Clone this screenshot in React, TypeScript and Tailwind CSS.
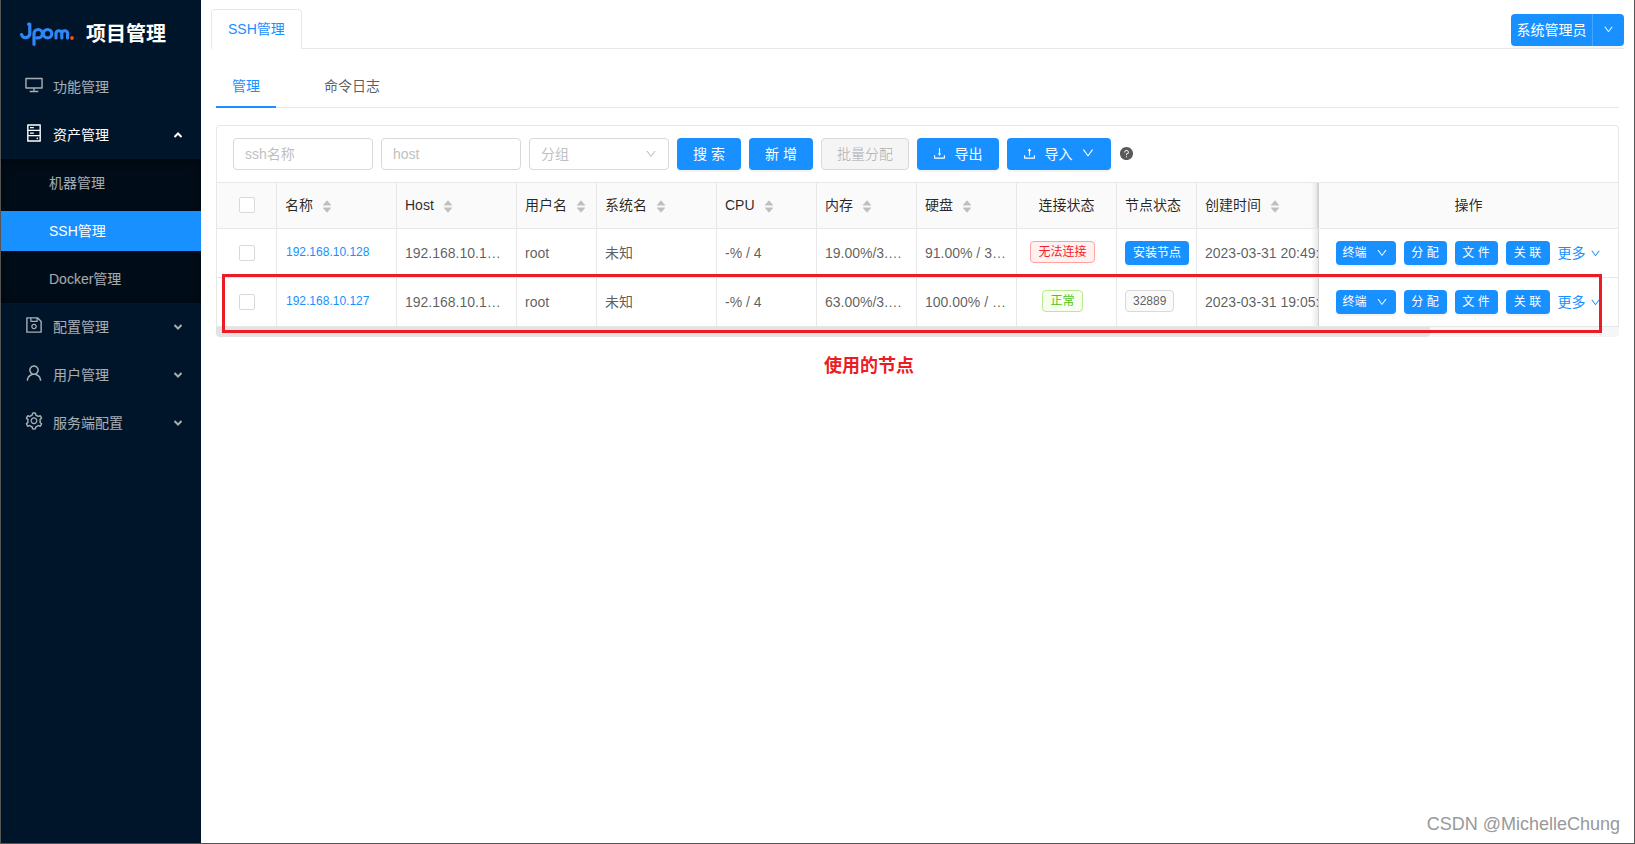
import type { ReactNode } from 'react';
import {
  AiFillCaretDown,
  AiFillCaretUp,
  AiFillQuestionCircle,
  AiOutlineDesktop,
  AiOutlineDown,
  AiOutlineDownload,
  AiOutlineHdd,
  AiOutlineSave,
  AiOutlineSetting,
  AiOutlineUpload,
  AiOutlineUser,
} from 'react-icons/ai';

const primary = 'bg-[#1890ff] text-white rounded shadow-[0_2px_0_rgba(0,0,0,0.045)]';

function Logo() {
  return (
    <svg viewBox="0 0 54 26" className="h-[26px] w-[54px] shrink-0" fill="none" aria-label="Jpom">
      <g stroke="#2f86f6" strokeWidth="3.2" strokeLinecap="round" strokeLinejoin="round">
        <path d="M8.600 3.200H9.800V13a4.200 4.200 0 0 1-8.200 .6" />
        <path d="M14 23.300V12.600a4.200 4.200 0 1 1 4.200 4.300h-1.200" />
        <circle cx="27.600" cy="12.700" r="4.200" />
        <path d="M36 17v-5a3 3 0 0 1 5.800 0v5M41.800 12a3 3 0 0 1 5.800 0v5" />
      </g>
      <circle cx="52" cy="17" r="1.900" fill="#ff4a12" />
    </svg>
  );
}

function Caret({ up = false }: { up?: boolean }) {
  return (
    <svg viewBox="0 0 10 8" className="h-2 w-2.5" fill="none" stroke="currentColor" strokeWidth="2">
      <path d={up ? 'M1.500 6L5 2.500L8.500 6' : 'M1.500 2L5 5.500L8.500 2'} />
    </svg>
  );
}

function MenuRow({ icon, label, open }: { icon: ReactNode; label: string; open?: boolean }) {
  return (
    <li className="py-1">
      <a
        href="#"
        className={
          open
            ? 'flex h-10 items-center pr-[18px] pl-[23px] text-white'
            : 'flex h-10 items-center pr-[18px] pl-[23px] text-white/65'
        }
      >
        <span className="mr-[9px] pb-1 text-[20px]">{icon}</span>
        <span className="grow">{label}</span>
        {open !== undefined && <Caret up={open} />}
      </a>
    </li>
  );
}

function SubRow({ label, active = false }: { label: string; active?: boolean }) {
  return (
    <li className="py-1">
      <a
        href="#"
        className={
          active
            ? 'flex h-10 items-center bg-[#1890ff] pl-12 text-white'
            : 'flex h-10 items-center pl-12 text-white/65'
        }
      >
        {label}
      </a>
    </li>
  );
}

function Sidebar() {
  return (
    <aside className="w-[200px] shrink-0 bg-[#001529]">
      <div className="flex h-[63px] items-center gap-3 pt-1 pl-[19px] text-white">
        <Logo />
        <h1 className="text-[20px] font-bold">项目管理</h1>
      </div>
      <nav>
        <ul>
          <MenuRow icon={<AiOutlineDesktop />} label="功能管理" />
          <MenuRow icon={<AiOutlineHdd />} label="资产管理" open />
          <li className="bg-[#000c17] shadow-[inset_0_2px_8px_rgba(0,0,0,0.45)]">
            <ul>
              <SubRow label="机器管理" />
              <SubRow label="SSH管理" active />
              <SubRow label="Docker管理" />
            </ul>
          </li>
          <MenuRow icon={<AiOutlineSave />} label="配置管理" open={false} />
          <MenuRow icon={<AiOutlineUser />} label="用户管理" open={false} />
          <MenuRow icon={<AiOutlineSetting />} label="服务端配置" open={false} />
        </ul>
      </nav>
    </aside>
  );
}

function Toolbar() {
  const field = 'h-8 w-[140px] rounded border border-[#d9d9d9] bg-white px-[11px] placeholder:text-[#bfbfbf]';
  return (
    <form className="flex items-center gap-2 px-4 py-3">
      <input className={field} placeholder="ssh名称" aria-label="ssh名称" />
      <input className={field} placeholder="host" aria-label="host" />
      <div className="relative">
        <select
          className="block h-8 w-[140px] appearance-none rounded border border-[#d9d9d9] bg-white px-[11px] text-[#bfbfbf]"
          aria-label="分组"
        >
          <option>分组</option>
        </select>
        <AiOutlineDown className="pointer-events-none absolute top-2.5 right-3 text-[12px] text-[#bfbfbf]" />
      </div>
      <button type="button" className={`h-8 w-16 ${primary}`}>搜 索</button>
      <button type="button" className={`h-8 w-16 ${primary}`}>新 增</button>
      <button type="button" disabled className="h-8 w-[88px] rounded border border-[#d9d9d9] bg-[#f5f5f5] text-black/25">
        批量分配
      </button>
      <button type="button" className={`flex h-8 w-[82px] items-center justify-center gap-2 pr-0.5 ${primary}`}>
        <AiOutlineDownload className="mb-0.5 text-[15px]" />
        导出
      </button>
      <button type="button" className={`flex h-8 w-[104px] items-center justify-center gap-2 pr-0.5 ${primary}`}>
        <AiOutlineUpload className="mb-0.5 text-[15px]" />
        导入
        <AiOutlineDown className="mb-0.5" />
      </button>
      <AiFillQuestionCircle className="mb-0.5 text-[15px] text-black/65" />
    </form>
  );
}

const columns = [
  { title: '名称', sort: true },
  { title: 'Host', sort: true },
  { title: '用户名', sort: true },
  { title: '系统名', sort: true },
  { title: 'CPU', sort: true },
  { title: '内存', sort: true },
  { title: '硬盘', sort: true },
  { title: '连接状态', center: true },
  { title: '节点状态' },
  { title: '创建时间', sort: true },
];

const rows = [
  { ip: '192.168.10.128', mem: '19.00%/3.70 GB', disk: '91.00% / 36.97 GB', ok: false, time: '2023-03-31 20:49:12' },
  { ip: '192.168.10.127', mem: '63.00%/3.70 GB', disk: '100.00% / 16.98 GB', ok: true, time: '2023-03-31 19:05:33' },
];

const cell = 'truncate border-r border-b border-[#e8e8e8] px-2';
const small = `h-6 text-[12px] ${primary}`;
const tag = 'mb-0.5 inline-block rounded border px-[7px] align-middle text-[12px] leading-5';
const fixedCell =
  "relative border-r border-b border-l border-[#e8e8e8] before:absolute before:inset-y-0 before:-left-2 before:w-2 before:bg-linear-to-l before:from-black/10 before:to-transparent before:content-['']";

function Check({ label }: { label: string }) {
  return (
    <input
      type="checkbox"
      aria-label={label}
      className="mx-auto block size-4 appearance-none rounded-xs border border-[#d9d9d9] bg-white"
    />
  );
}

function HostTable() {
  return (
    <div className="overflow-hidden">
      <table className="w-full table-fixed border-separate border-spacing-0 border-t border-l border-[#e8e8e8]">
        <colgroup>
          <col className="w-[60px]" />
          <col className="w-[120px]" />
          <col className="w-[120px]" />
          <col className="w-[80px]" />
          <col className="w-[120px]" />
          <col className="w-[100px]" />
          <col className="w-[100px]" />
          <col className="w-[100px]" />
          <col className="w-[100px]" />
          <col className="w-[80px]" />
          <col />
          <col className="w-[301px]" />
        </colgroup>
        <thead className="bg-[#fafafa] text-black/85">
          <tr className="h-[46px]">
            <th className={`${cell} pb-0.5`}>
              <Check label="全选" />
            </th>
            {columns.map((c) => (
              <th key={c.title} className={`${cell} pb-0.5 font-normal ${c.center ? 'text-center' : 'text-left'}`}>
                <span className="inline-flex items-center gap-2 align-middle">
                  {c.title}
                  {c.sort && (
                    <span className="flex flex-col pt-1 text-[12px] text-[#bfbfbf]">
                      <AiFillCaretUp />
                      <AiFillCaretDown className="-mt-[5px]" />
                    </span>
                  )}
                </span>
              </th>
            ))}
            <th className={`${fixedCell} bg-[#fafafa] pb-0.5 font-normal`}>操作</th>
          </tr>
        </thead>
        <tbody>
          {rows.map((r) => (
            <tr key={r.ip} className="h-[49px]">
              <td className={cell}>
                <Check label={r.ip} />
              </td>
              <td className={cell}>
                <button type="button" className="block px-px pb-0.5 text-[12px] text-[#1890ff]">
                  {r.ip}
                </button>
              </td>
              <td className={cell}>{`${r.ip}:22`}</td>
              <td className={cell}>root</td>
              <td className={cell}>未知</td>
              <td className={cell}>-% / 4</td>
              <td className={cell}>{r.mem}</td>
              <td className={cell}>{r.disk}</td>
              <td className={`${cell} text-center`}>
                {r.ok ? (
                  <span className={`${tag} mr-2 border-[#b7eb8f] bg-[#f6ffed] text-[#52c41a]`}>正常</span>
                ) : (
                  <span className={`${tag} mr-2 border-[#ffa39e] bg-[#fff1f0] text-[#f5222d]`}>无法连接</span>
                )}
              </td>
              <td className={cell}>
                {r.ok ? (
                  <span className={`${tag} border-[#d9d9d9] bg-[#fafafa]`}>32889</span>
                ) : (
                  <button type="button" className={`block w-16 ${small}`}>安装节点</button>
                )}
              </td>
              <td className="overflow-hidden border-b border-[#e8e8e8] pl-2 whitespace-nowrap">{r.time}</td>
              <td className={`${fixedCell} bg-white`}>
                <div className="flex items-center justify-center gap-2 pr-px">
                  <button type="button" className={`flex w-[60px] items-center justify-between pr-2 pl-[7px] ${small}`}>
                    终端
                    <AiOutlineDown />
                  </button>
                  <button type="button" className={`w-[43px] ${small}`}>分 配</button>
                  <button type="button" className={`w-[43px] ${small}`}>文 件</button>
                  <button type="button" className={`w-11 ${small}`}>关 联</button>
                  <a href="#" className="flex items-center gap-1 text-[#1890ff]">
                    更多
                    <AiOutlineDown className="text-[11px]" />
                  </a>
                </div>
              </td>
            </tr>
          ))}
        </tbody>
      </table>
    </div>
  );
}

export default function App() {
  return (
    <div className="relative flex min-h-screen border-r border-b border-l border-[#555] bg-white font-['Liberation_Sans','Noto_Sans_CJK_SC',sans-serif] text-[14px] leading-[22px] text-black/65">
      <Sidebar />
      <div className="min-w-0 grow px-2.5 pt-[9px]">
        <header className="flex h-10 items-end justify-between border-b border-[#e8e8e8]">
          <a
            href="#"
            className="-mb-px flex h-10 items-center rounded-t border border-b-0 border-[#e8e8e8] bg-white px-4 pb-0.5 text-[#1890ff]"
          >
            SSH管理
          </a>
          <div className="mb-0.5 flex">
            <button type="button" className="h-8 w-[82px] rounded-l border-r border-[#40a9ff] bg-[#1890ff] text-white shadow-[0_2px_0_rgba(0,0,0,0.045)]">
              系统管理员
            </button>
            <button type="button" aria-label="用户菜单" className="flex h-8 w-[31px] items-center justify-center rounded-r bg-[#1890ff] pb-0.5 text-[11px] text-white shadow-[0_2px_0_rgba(0,0,0,0.045)]">
              <AiOutlineDown />
            </button>
          </div>
        </header>
        <main className="px-[5px] pt-4">
          <nav className="flex gap-8 border-b border-[#e8e8e8]">
            <a href="#" className="-mb-px flex h-[43px] items-center border-b-2 border-[#1890ff] px-4 text-[#1890ff]">
              管理
            </a>
            <a href="#" className="flex h-[42px] items-center px-4">
              命令日志
            </a>
          </nav>
          <section className="relative mt-[17px]">
            <div className="rounded-t border border-b-0 border-[#e8e8e8]">
              <Toolbar />
            </div>
            <HostTable />
            <div className="h-2.5 rounded-b bg-[#f5f6f8]">
              <div className="h-full w-[86.5%] rounded-b bg-[#e3e3e3]" />
            </div>
            <div className="pointer-events-none absolute top-[149px] right-[17px] left-1.5 h-[59px] border-3 border-[#ed1c24]" />
            <p className="absolute top-[230px] left-[608px] text-[18px] font-bold text-[#ed1c24]">使用的节点</p>
          </section>
        </main>
      </div>
      <p className="absolute right-3.5 bottom-2 text-[18px] text-[#999]">CSDN @MichelleChung</p>
    </div>
  );
}
